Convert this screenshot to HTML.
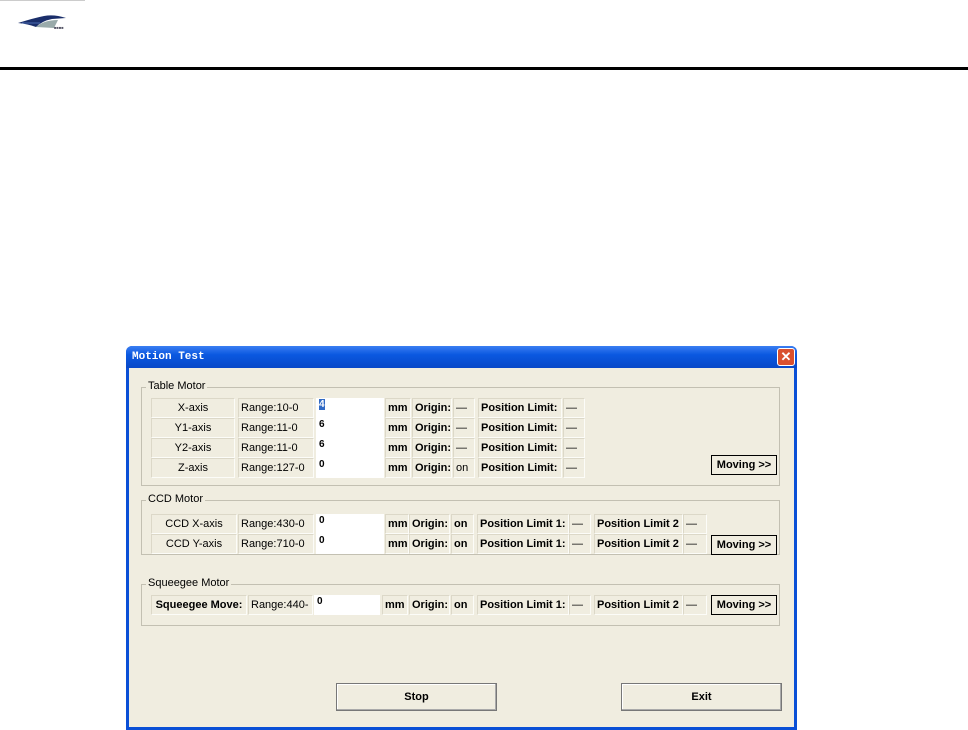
<!DOCTYPE html>
<html><head><style>
*{margin:0;padding:0;box-sizing:border-box}
body{width:968px;height:730px;background:#fff;position:relative;overflow:hidden;font-family:"Liberation Sans",sans-serif}
.a{position:absolute}
.win{left:126px;top:346px;width:671px;height:384px;background:#0a4fd6;border-radius:6px 6px 0 0}
.tb{left:126px;top:346px;width:671px;height:22px;background:linear-gradient(#3b7ef2,#0a58e0 40%,#0848c8);border-radius:6px 6px 0 0;color:#fff;font:bold 11px "Liberation Mono",monospace;padding:5px 6px}
.body{left:129px;top:368px;width:665px;height:359px;background:#f0ede0}
.close{left:777px;top:348px;width:18px;height:18px;background:#d9502e;border:1px solid #fff;border-radius:3px;color:#fff;font:bold 13px/16px "Liberation Sans";text-align:center}
.grp{border:1px solid #c3c0b2}
.gl{background:#f0ede0;font-size:11px;padding:0 2px;color:#000}
.c{position:absolute;height:20px;border:1px solid #fff;border-color:#dcd8c8 #fcfcf8 #fcfcf8 #dcd8c8;font-size:11px;line-height:18px;color:#000;white-space:nowrap;overflow:hidden;padding-left:2px}
.ctr{text-align:center;padding:0}
.b{font-weight:bold}
.in{position:absolute;height:20px;background:#fff;font:bold 10px "Liberation Sans";padding:1px 3px}
.btn{position:absolute;border:1px solid #000;background:#f0ede0;font-size:11px;font-weight:bold;text-align:center}
.big{position:absolute;border:1px solid #777;box-shadow:inset -1px -1px #aaa, inset 1px 1px #fff;background:#f0ede0;font-size:11px;font-weight:bold;text-align:center;line-height:26px}
</style></head><body>
<div class="a" style="left:0;top:0;width:85px;height:1px;background:#ccc"></div>
<svg class="a" style="left:14px;top:10px" width="60" height="22"><path d="M4 13 Q20 8 30 6 Q40 4 52 8 L38 9 Q28 11 22 17 Q14 14 4 13Z" fill="#1a2e6a"/><path d="M22 17 Q30 10 44 10 L40 18 Z" fill="#9aa"/><path d="M8 13 L26 13" stroke="#4a6ab0"/><text x="40" y="19" font-size="4" fill="#556">■■■■</text></svg>
<div class="a" style="left:0;top:67px;width:968px;height:3px;background:#000"></div>

<div class="a win"></div>
<div class="a tb">Motion Test</div>
<div class="a close">✕</div>
<div class="a body"></div>

<div class="a grp" style="left:141px;top:387px;width:639px;height:99px"></div>
<div class="a gl" style="left:146px;top:380px">Table Motor</div>
<div class="a grp" style="left:141px;top:500px;width:639px;height:55px"></div>
<div class="a gl" style="left:146px;top:493px">CCD Motor</div>
<div class="a grp" style="left:141px;top:584px;width:639px;height:42px"></div>
<div class="a gl" style="left:146px;top:577px">Squeegee Motor</div>

<div class="c ctr" style="left:151px;top:398px;width:84px">X-axis</div>
<div class="c" style="left:238px;top:398px;width:76px">Range:10-0</div>
<div class="in" style="left:316px;top:398px;width:68px"><span style="background:#316ac5;color:#fff">4</span></div>
<div class="c b" style="left:385px;top:398px;width:26px">mm</div>
<div class="c b" style="left:412px;top:398px;width:40px">Origin:</div>
<div class="c" style="left:453px;top:398px;width:22px">—</div>
<div class="c b" style="left:478px;top:398px;width:84px">Position Limit:</div>
<div class="c" style="left:563px;top:398px;width:22px">—</div>

<div class="c ctr" style="left:151px;top:418px;width:84px">Y1-axis</div>
<div class="c" style="left:238px;top:418px;width:76px">Range:11-0</div>
<div class="in" style="left:316px;top:418px;width:68px">6</div>
<div class="c b" style="left:385px;top:418px;width:26px">mm</div>
<div class="c b" style="left:412px;top:418px;width:40px">Origin:</div>
<div class="c" style="left:453px;top:418px;width:22px">—</div>
<div class="c b" style="left:478px;top:418px;width:84px">Position Limit:</div>
<div class="c" style="left:563px;top:418px;width:22px">—</div>

<div class="c ctr" style="left:151px;top:438px;width:84px">Y2-axis</div>
<div class="c" style="left:238px;top:438px;width:76px">Range:11-0</div>
<div class="in" style="left:316px;top:438px;width:68px">6</div>
<div class="c b" style="left:385px;top:438px;width:26px">mm</div>
<div class="c b" style="left:412px;top:438px;width:40px">Origin:</div>
<div class="c" style="left:453px;top:438px;width:22px">—</div>
<div class="c b" style="left:478px;top:438px;width:84px">Position Limit:</div>
<div class="c" style="left:563px;top:438px;width:22px">—</div>

<div class="c ctr" style="left:151px;top:458px;width:84px">Z-axis</div>
<div class="c" style="left:238px;top:458px;width:76px">Range:127-0</div>
<div class="in" style="left:316px;top:458px;width:68px">0</div>
<div class="c b" style="left:385px;top:458px;width:26px">mm</div>
<div class="c b" style="left:412px;top:458px;width:40px">Origin:</div>
<div class="c" style="left:453px;top:458px;width:22px">on</div>
<div class="c b" style="left:478px;top:458px;width:84px">Position Limit:</div>
<div class="c" style="left:563px;top:458px;width:22px">—</div>
<div class="btn" style="left:711px;top:455px;width:66px;height:20px;line-height:18px">Moving &gt;&gt;</div>

<div class="c ctr" style="left:151px;top:514px;width:86px">CCD X-axis</div>
<div class="c" style="left:238px;top:514px;width:76px">Range:430-0</div>
<div class="in" style="left:316px;top:514px;width:68px">0</div>
<div class="c b" style="left:385px;top:514px;width:24px">mm</div>
<div class="c b" style="left:409px;top:514px;width:41px">Origin:</div>
<div class="c b" style="left:451px;top:514px;width:23px">on</div>
<div class="c b" style="left:477px;top:514px;width:92px">Position Limit 1:</div>
<div class="c" style="left:569px;top:514px;width:22px">—</div>
<div class="c b" style="left:594px;top:514px;width:89px">Position Limit 2</div>
<div class="c" style="left:683px;top:514px;width:24px">—</div>

<div class="c ctr" style="left:151px;top:534px;width:86px">CCD Y-axis</div>
<div class="c" style="left:238px;top:534px;width:76px">Range:710-0</div>
<div class="in" style="left:316px;top:534px;width:68px">0</div>
<div class="c b" style="left:385px;top:534px;width:24px">mm</div>
<div class="c b" style="left:409px;top:534px;width:41px">Origin:</div>
<div class="c b" style="left:451px;top:534px;width:23px">on</div>
<div class="c b" style="left:477px;top:534px;width:92px">Position Limit 1:</div>
<div class="c" style="left:569px;top:534px;width:22px">—</div>
<div class="c b" style="left:594px;top:534px;width:89px">Position Limit 2</div>
<div class="c" style="left:683px;top:534px;width:24px">—</div>
<div class="btn" style="left:711px;top:535px;width:66px;height:20px;line-height:18px">Moving &gt;&gt;</div>

<div class="c ctr b" style="left:151px;top:595px;width:96px">Squeegee Move:</div>
<div class="c" style="left:248px;top:595px;width:65px">Range:440-</div>
<div class="in" style="left:314px;top:595px;width:66px">0</div>
<div class="c b" style="left:382px;top:595px;width:26px">mm</div>
<div class="c b" style="left:409px;top:595px;width:41px">Origin:</div>
<div class="c b" style="left:451px;top:595px;width:23px">on</div>
<div class="c b" style="left:477px;top:595px;width:92px">Position Limit 1:</div>
<div class="c" style="left:569px;top:595px;width:22px">—</div>
<div class="c b" style="left:594px;top:595px;width:89px">Position Limit 2</div>
<div class="c" style="left:683px;top:595px;width:24px">—</div>
<div class="btn" style="left:711px;top:595px;width:66px;height:20px;line-height:18px">Moving &gt;&gt;</div>

<div class="big" style="left:336px;top:683px;width:161px;height:28px">Stop</div>
<div class="big" style="left:621px;top:683px;width:161px;height:28px">Exit</div>
</body></html>
